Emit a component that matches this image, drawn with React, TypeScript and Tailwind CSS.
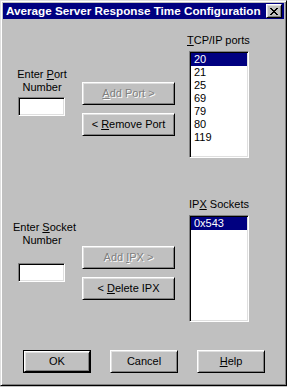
import React from 'react';

function Btn({
  children,
  disabled,
  className = '',
}: {
  children: React.ReactNode;
  disabled?: boolean;
  className?: string;
}) {
  return (
    <div
      className={`flex items-center justify-center bg-[#c0c0c0] border border-t-white border-l-white border-r-black border-b-black shadow-[inset_1px_1px_0_#dfdfdf,inset_-1px_-1px_0_#808080] ${
        disabled ? 'text-[#808080] [text-shadow:1px_1px_0_#fff]' : 'text-black'
      } ${className}`}
    >
      {children}
    </div>
  );
}

function Field() {
  return (
    <div className="w-[47px] h-[19px] bg-white border border-t-[#808080] border-l-[#808080] border-r-white border-b-white shadow-[inset_1px_1px_0_#000,inset_-1px_-1px_0_#dfdfdf]" />
  );
}

function ListBox({ items }: { items: string[] }) {
  return (
    <div className="w-[60px] h-[107px] bg-white p-[1px] border border-t-[#808080] border-l-[#808080] border-r-white border-b-white shadow-[inset_1px_1px_0_#000,inset_-1px_-1px_0_#dfdfdf]">
      {items.map((it, i) => (
        <div
          key={it}
          className={
            i === 0
              ? 'h-[13px] leading-[13px] pl-[3px] bg-[#000080] text-white'
              : 'h-[13px] leading-[13px] pl-[3px]'
          }
        >
          {it}
        </div>
      ))}
    </div>
  );
}

// classic win95 close glyph
function CloseGlyph() {
  const rows = ['11000011', '01100110', '00111100', '00011000', '00111100', '01100110', '11000011'];
  return (
    <svg width="8" height="7" viewBox="0 0 8 7" shapeRendering="crispEdges">
      {rows.map((r, y) =>
        r.split('').map((c, x) => (c === '1' ? <rect key={`${x}-${y}`} x={x} y={y} width="1" height="1" fill="#000" /> : null))
      )}
    </svg>
  );
}

export default function App() {
  return (
    <div className="w-[287px] h-[387px] bg-[#c0c0c0] font-['Liberation_Sans',Arial,sans-serif] text-[11px] text-black">
      <div className="w-[287px] h-[386px] flex flex-col p-[2px] border border-t-[#dfdfdf] border-l-[#dfdfdf] border-r-black border-b-black shadow-[inset_1px_1px_0_#fff,inset_-1px_-1px_0_#808080]">
        {/* title bar */}
        <div className="h-[16px] shrink-0 bg-[#000080] flex items-center justify-between pl-[3px] pr-[2px]">
          <span className="text-white font-bold text-[11.7px] leading-[16px] whitespace-nowrap">
            Average Server Response Time Configuration
          </span>
          <div className="w-[16px] h-[14px] flex items-center justify-center bg-[#c0c0c0] border border-t-white border-l-white border-r-black border-b-black shadow-[inset_1px_1px_0_#dfdfdf,inset_-1px_-1px_0_#808080]">
            <CloseGlyph />
          </div>
        </div>

        {/* TCP/IP section */}
        <div className="flex items-start">
          <div className="ml-[10px] w-[58px] mt-[49px] flex flex-col">
            <div className="text-center leading-[13px]">
              Enter <u>P</u>ort
            </div>
            <div className="text-center leading-[13px]">Number</div>
            <div className="ml-[5px] mt-[3px]">
              <Field />
            </div>
          </div>
          <div className="ml-[11px] mt-[63px] flex flex-col gap-[8px]">
            <Btn disabled className="w-[93px] h-[23px]">
              <span>
                <u>A</u>dd Port &gt;
              </span>
            </Btn>
            <Btn className="w-[93px] h-[23px]">
              <span>
                &lt; <u>R</u>emove Port
              </span>
            </Btn>
          </div>
          <div className="ml-[14px] mt-[15px] flex flex-col">
            <div className="-ml-[2px] h-[13px] leading-[13px] whitespace-nowrap">
              <u>T</u>CP/IP ports
            </div>
            <div className="mt-[4px]">
              <ListBox items={['20', '21', '25', '69', '79', '80', '119']} />
            </div>
          </div>
        </div>

        {/* IPX section */}
        <div className="flex items-start">
          <div className="ml-[10px] w-[58px] mt-[63px] flex flex-col">
            <div className="text-center leading-[13px] whitespace-nowrap">
              Enter <u>S</u>ocket
            </div>
            <div className="text-center leading-[13px]">Number</div>
            <div className="ml-[5px] mt-[16px]">
              <Field />
            </div>
          </div>
          <div className="ml-[11px] mt-[88px] flex flex-col gap-[8px]">
            <Btn disabled className="w-[93px] h-[23px]">
              <span>
                Add <u>I</u>PX &gt;
              </span>
            </Btn>
            <Btn className="w-[93px] h-[23px]">
              <span>
                &lt; <u>D</u>elete IPX
              </span>
            </Btn>
          </div>
          <div className="ml-[14px] mt-[40px] flex flex-col">
            <div className="h-[13px] leading-[13px] whitespace-nowrap">
              IP<u>X</u> Sockets
            </div>
            <div className="mt-[4px]">
              <ListBox items={['0x543']} />
            </div>
          </div>
        </div>

        {/* dialog buttons */}
        <div className="flex mt-[28px] ml-[20px] gap-[19px]">
          <div className="w-[68px] h-[23px] border border-black">
            <Btn className="w-full h-full">OK</Btn>
          </div>
          <Btn className="w-[68px] h-[23px]">Cancel</Btn>
          <Btn className="w-[68px] h-[23px]">
            <span>
              <u>H</u>elp
            </span>
          </Btn>
        </div>
      </div>
    </div>
  );
}
